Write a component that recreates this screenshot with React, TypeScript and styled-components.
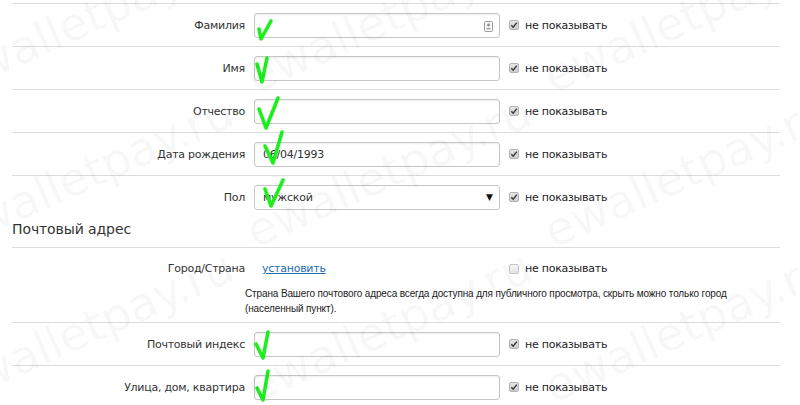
import styled, { createGlobalStyle } from "styled-components";

const GlobalStyle = createGlobalStyle`
  body {
    margin: 0;
    background: #ffffff;
  }
`;

type Pt = [number, number];

const checks: Record<string, Pt[]> = {
  surname: [[5, 16], [7, 26], [17, 8]],
  name: [[3, 8], [8, 26], [13, 2]],
  patronymic: [[5, 10], [12, 29], [24, -1]],
  birth: [[11, 4], [19, 21], [28, -10]],
  sex: [[11, 4], [17, 21], [29, -5]],
  zip: [[2, 12], [9, 26], [14, 0]],
  street: [[3, 13], [9, 25], [14, -4]],
};

const marks: Pt[] = [
  [-40, 100], [258, 100], [556, 100],
  [-40, 255], [258, 255], [556, 255],
  [-40, 410], [258, 410], [556, 410],
];

const GreenCheck = ({ points }: { points: Pt[] }) => (
  <CheckMark width="40" height="30">
    <polyline
      points={points.map((p) => p.join(",")).join(" ")}
      fill="none"
      stroke="#1cf01c"
      strokeWidth="3.6"
      strokeLinecap="round"
      strokeLinejoin="round"
    />
  </CheckMark>
);

const HideBox = ({ checked = true }: { checked?: boolean }) => (
  <Hide>
    <Box $checked={checked}>
      {checked && (
        <svg width="8" height="8" viewBox="0 0 8 8">
          <path d="M1.3 4.2 L3.2 6.2 L6.8 1.6" fill="none" stroke="#3c3c3c" strokeWidth="1.5" />
        </svg>
      )}
    </Box>
    не показывать
  </Hide>
);

const ContactIcon = () => (
  <AutoIcon width="9" height="11" viewBox="0 0 9 11">
    <rect x="0.5" y="0.5" width="8" height="10" rx="1" fill="#f4f4f4" stroke="#9c9c9c" />
    <circle cx="4.5" cy="4" r="1.4" fill="#8c8c8c" />
    <path d="M2.2 8.3 C2.4 6.5 6.6 6.5 6.8 8.3 Z" fill="#8c8c8c" />
  </AutoIcon>
);

const TextRow = ({ label, check, value, icon }: { label: string; check: Pt[]; value?: string; icon?: boolean }) => (
  <Row>
    <Label>{label}</Label>
    <Field>
      <TextInput readOnly value={value ?? ""} />
      {icon && <ContactIcon />}
      <GreenCheck points={check} />
    </Field>
    <HideBox />
  </Row>
);

const App = () => {
  return (
    <Page>
      <GlobalStyle />
      <Form>
        <TextRow label="Фамилия" check={checks.surname} icon />
        <TextRow label="Имя" check={checks.name} />
        <TextRow label="Отчество" check={checks.patronymic} />
        <TextRow label="Дата рождения" check={checks.birth} value="06/04/1993" />
        <Row>
          <Label>Пол</Label>
          <Field>
            <Select>
              <span>мужской</span>
              <Arrow>▼</Arrow>
            </Select>
            <GreenCheck points={checks.sex} />
          </Field>
          <HideBox />
        </Row>

        <SectionTitle>Почтовый адрес</SectionTitle>

        <CityBlock>
          <Row $h={41} $plain>
            <Label>Город/Страна</Label>
            <Field>
              <SetLink href="#">установить</SetLink>
            </Field>
            <HideBox checked={false} />
          </Row>
          <Note>
            Страна Вашего почтового адреса всегда доступна для публичного просмотра, скрыть можно только город
            <br />
            (населенный пункт).
          </Note>
        </CityBlock>

        <TextRow label="Почтовый индекс" check={checks.zip} />
        <TextRow label="Улица, дом, квартира" check={checks.street} />
      </Form>

      <Watermarks aria-hidden="true">
        {marks.map(([x, y], i) => (
          <Mark key={i} $x={x} $y={y}>ewalletpay.ru</Mark>
        ))}
      </Watermarks>
    </Page>
  );
};

export default App;

const Page = styled.div`
  position: relative;
  width: 800px;
  height: 405px;
  overflow: hidden;
  background: #ffffff;
  font-family: "DejaVu Sans", "Noto Sans", sans-serif;
  font-size: 11px;
  letter-spacing: -0.25px;
  color: #222222;
`;

const Form = styled.div`
  padding: 3px 20px 0 12px;
`;

const Row = styled.div<{ $h?: number; $plain?: boolean }>`
  display: grid;
  grid-template-columns: 233px 246px auto;
  column-gap: 9px;
  align-items: center;
  box-sizing: border-box;
  height: ${(p) => p.$h ?? 43}px;
  border-top: ${(p) => (p.$plain ? "none" : "1px solid #dcdcdc")};
`;

const Label = styled.div`
  text-align: right;
  color: #333333;
  white-space: nowrap;
`;

const Field = styled.div`
  position: relative;
  height: 25px;
  display: flex;
  align-items: center;
`;

const TextInput = styled.input`
  box-sizing: border-box;
  width: 100%;
  height: 25px;
  margin: 0;
  padding: 0 8px;
  border: 1px solid #c6c6c6;
  border-radius: 3px;
  box-shadow: inset 0 1px 2px rgba(0, 0, 0, 0.07);
  background: #ffffff;
  font-family: "DejaVu Sans", sans-serif;
  font-size: 11px;
  letter-spacing: -0.25px;
  color: #333333;
  outline: none;
`;

const Select = styled.div`
  box-sizing: border-box;
  width: 100%;
  height: 25px;
  padding: 0 6px 0 8px;
  display: flex;
  align-items: center;
  justify-content: space-between;
  border: 1px solid #c6c6c6;
  border-radius: 3px;
  background: #ffffff;
  color: #333333;
`;

const Arrow = styled.span`
  font-size: 9px;
  color: #111111;
  letter-spacing: 0;
`;

const AutoIcon = styled.svg`
  position: absolute;
  right: 7px;
  top: 8px;
`;

const CheckMark = styled.svg`
  position: absolute;
  left: 0;
  top: 0;
  overflow: visible;
  pointer-events: none;
`;

const Hide = styled.label`
  display: flex;
  align-items: center;
  gap: 6px;
  color: #222222;
  white-space: nowrap;
`;

const Box = styled.span<{ $checked: boolean }>`
  box-sizing: border-box;
  width: 10px;
  height: 10px;
  display: flex;
  align-items: center;
  justify-content: center;
  border: 1px solid ${(p) => (p.$checked ? "#b4b4b4" : "#c4c4c4")};
  border-radius: 2px;
  background: ${(p) =>
    p.$checked ? "linear-gradient(#e6e6e6, #cdcdcd)" : "linear-gradient(#f6f6f6, #e2e2e2)"};
`;

const SectionTitle = styled.div`
  padding: 2px 0 9px;
  line-height: 18px;
  font-size: 14px;
  letter-spacing: -0.1px;
  color: #333333;
`;

const CityBlock = styled.div`
  border-top: 1px solid #dcdcdc;
  padding-bottom: 6px;
`;

const SetLink = styled.a`
  padding-left: 8px;
  color: #1f6cb5;
  text-decoration: underline;
`;

const Note = styled.div`
  margin-top: -3px;
  padding-left: 233px;
  font-family: "Liberation Sans", Arial, sans-serif;
  font-size: 10px;
  line-height: 15px;
  letter-spacing: -0.13px;
  color: #222222;
`;

const Watermarks = styled.div`
  position: absolute;
  inset: 0;
  overflow: hidden;
  pointer-events: none;
`;

const Mark = styled.div<{ $x: number; $y: number }>`
  position: absolute;
  left: ${(p) => p.$x}px;
  top: ${(p) => p.$y - 46}px;
  height: 46px;
  line-height: 46px;
  font-family: "DejaVu Sans", sans-serif;
  font-size: 46px;
  letter-spacing: 0;
  white-space: nowrap;
  color: rgba(0, 0, 0, 0.045);
  transform: rotate(-24deg);
  transform-origin: 0 100%;
`;
